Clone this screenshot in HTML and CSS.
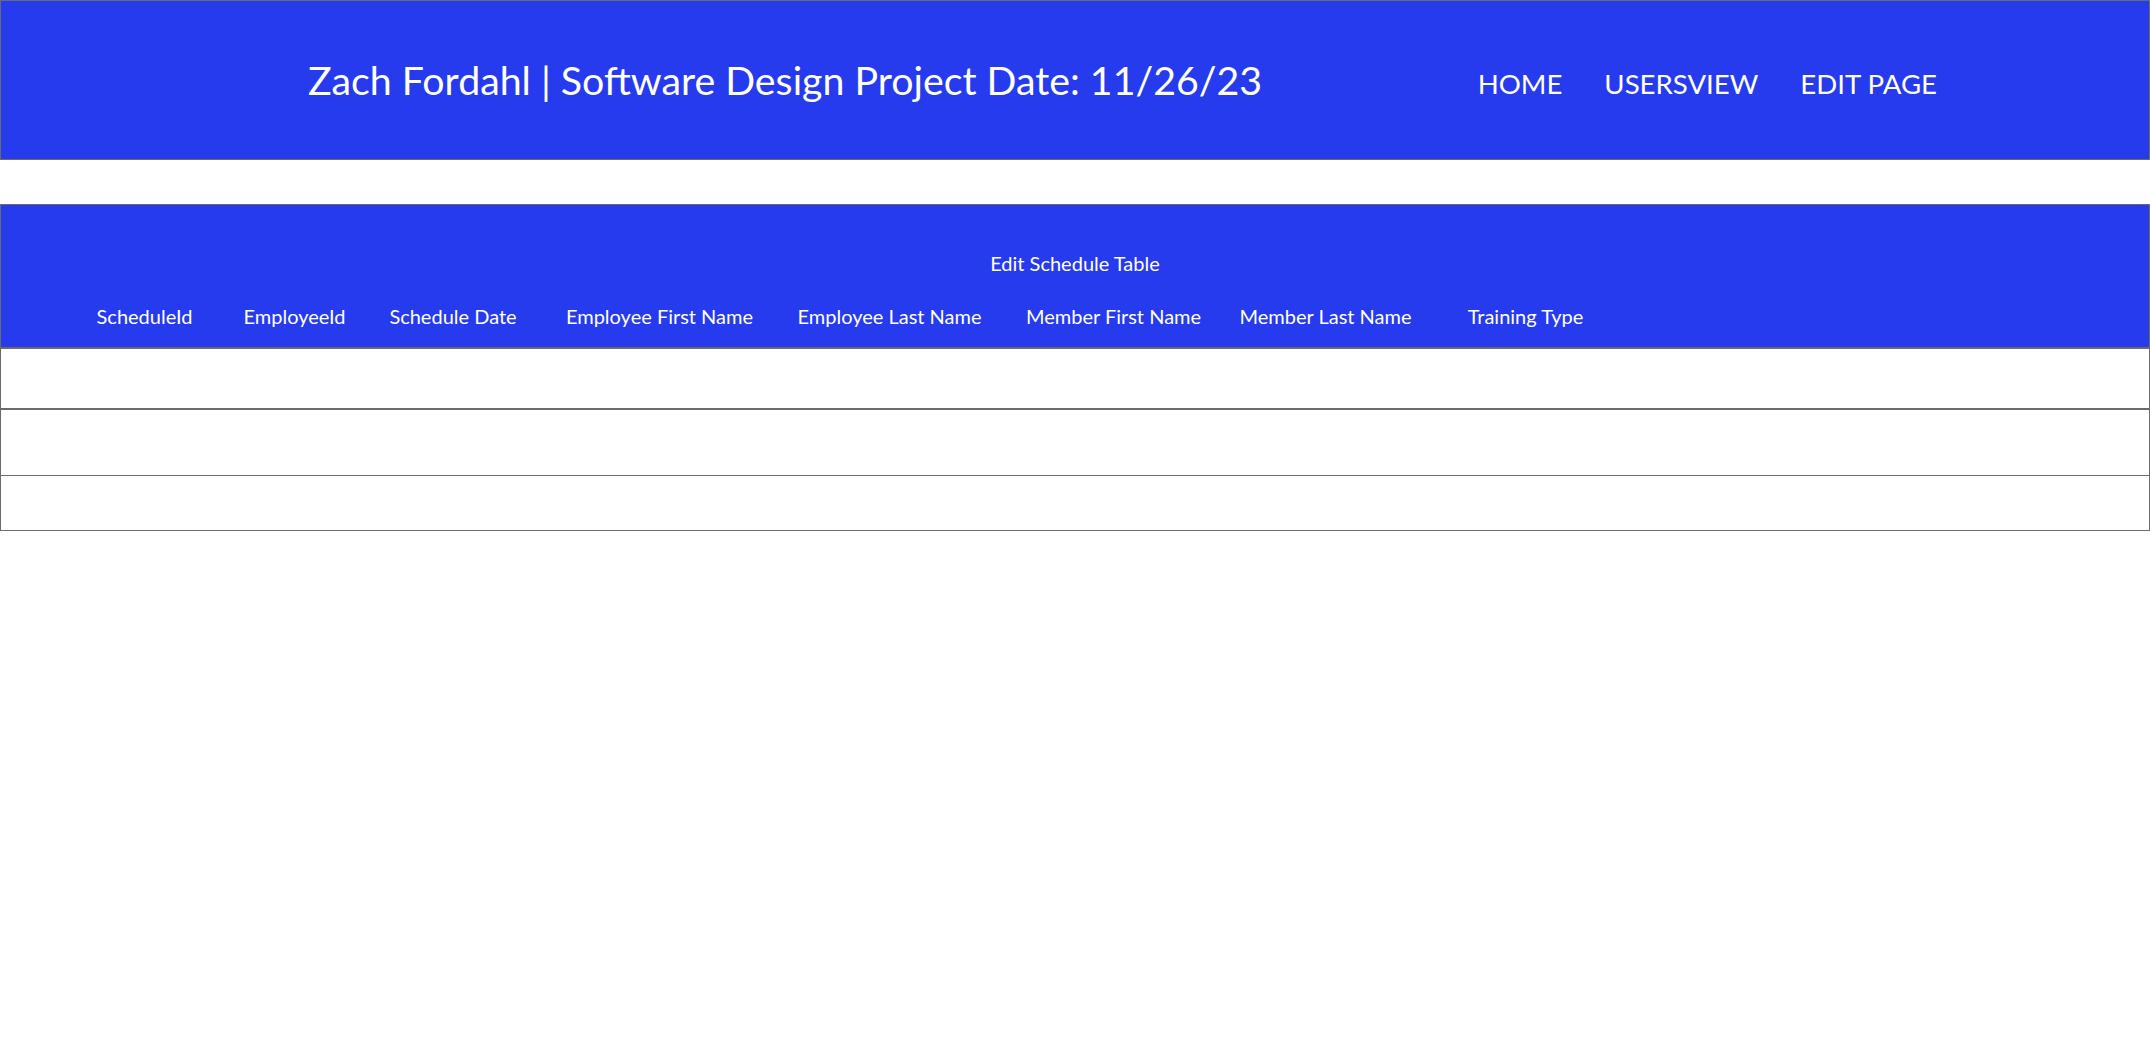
FILE: index.html
```html
<!DOCTYPE html>
<html lang="en">
<head>
<meta charset="utf-8">
<title>Edit Schedule</title>
<link rel="stylesheet" href="styles.css">
</head>
<body>
<header class="site-header">
  <h1 class="site-title">Zach Fordahl | Software Design Project Date: 11/26/23</h1>
  <nav class="site-nav">
    <a class="nav-link" href="#">HOME</a>
    <a class="nav-link" href="#">USERSVIEW</a>
    <a class="nav-link" href="#">EDIT PAGE</a>
  </nav>
</header>
<section class="schedule">
  <div class="schedule-head">
    <div class="schedule-caption">Edit Schedule Table</div>
    <div class="schedule-cols">
      <span class="col">ScheduleId</span>
      <span class="col">EmployeeId</span>
      <span class="col">Schedule Date</span>
      <span class="col">Employee First Name</span>
      <span class="col">Employee Last Name</span>
      <span class="col">Member First Name</span>
      <span class="col">Member Last Name</span>
      <span class="col">Training Type</span>
    </div>
  </div>
  <div class="row row-a"></div>
  <div class="row row-b"></div>
  <div class="row row-c"></div>
</section>
</body>
</html>
```
FILE: styles.css
```css
html, body {
  margin: 0;
  padding: 0;
  background: #ffffff;
}
body {
  font-family: "Lato", "Open Sans", "Noto Sans", sans-serif;
  color: #ffffff;
}
.site-header {
  display: flex;
  align-items: center;
  height: 158px;
  background: #263aee;
  border: 1px solid #6b6b6b;
  padding: 0 191px 0 307px;
}
.site-title {
  margin: 0;
  font-weight: 400;
  font-size: 39.3px;
  line-height: 1.2;
  flex: 1;
  white-space: nowrap;
}
.site-nav {
  display: flex;
  margin-top: 7px;
}
.nav-link {
  color: #ffffff;
  text-decoration: none;
  font-size: 27.6px;
  line-height: 1.2;
  padding: 0 21px;
}
.schedule {
  margin-top: 44px;
  border: 1px solid #6b6b6b;
}
.schedule-head {
  background: #263aee;
  border-bottom: 2px solid #6b6b6b;
  padding: 44px 0 17px;
  font-size: 20px;
  line-height: 28px;
}
.schedule-caption {
  text-align: center;
}
.schedule-cols {
  margin-top: 25px;
  display: grid;
  grid-template-columns: 149px 151px 166px 247px 213px 235px 189px 211px;
  padding-left: 69px;
}
.col {
  text-align: center;
  white-space: nowrap;
}
.row {
  background: #ffffff;
}
.row-a {
  height: 59px;
  border-bottom: 2px solid #6b6b6b;
}
.row-b {
  height: 65px;
  border-bottom: 1px solid #6b6b6b;
}
.row-c {
  height: 54px;
}
```
